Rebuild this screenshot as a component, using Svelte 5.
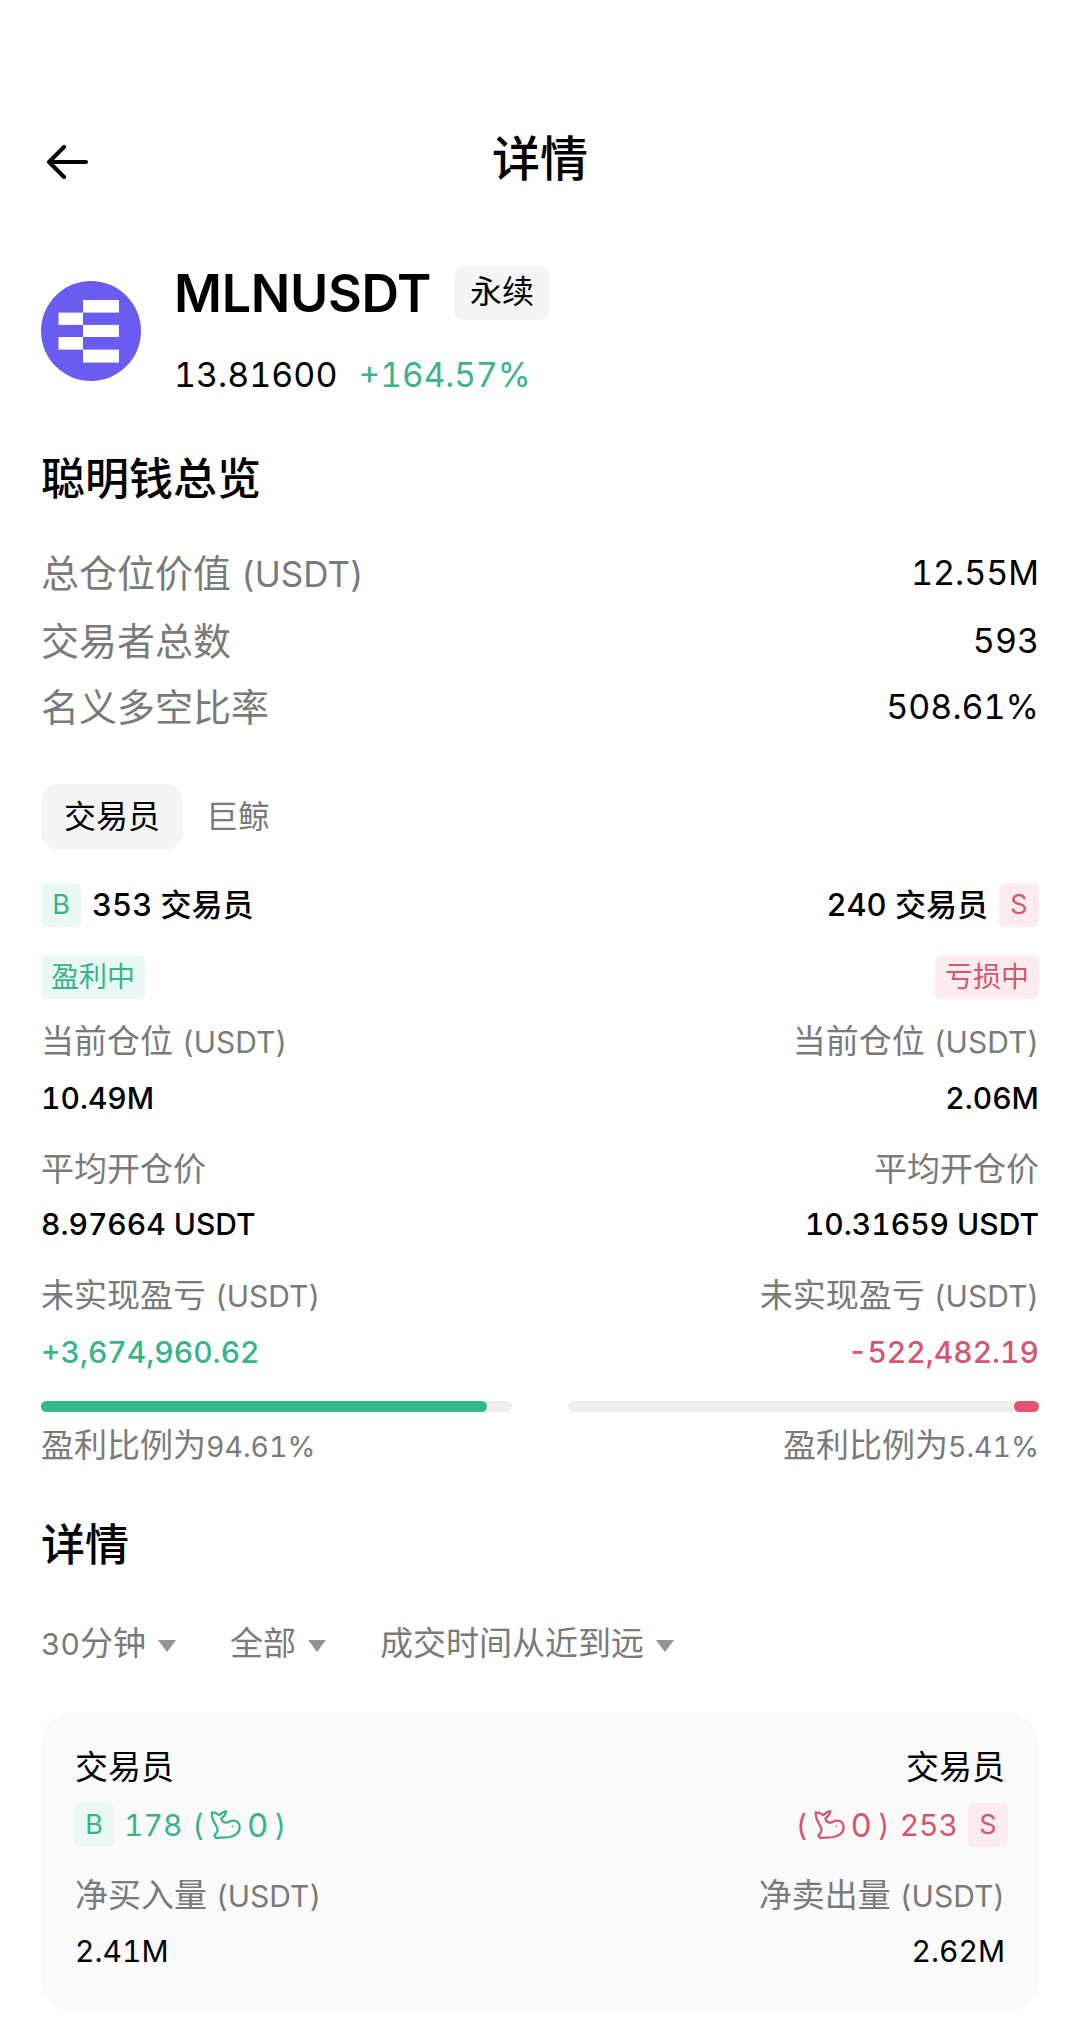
<script>
  const cols = [
    { label: '当前仓位', unit: '(USDT)', value: '10.49M', cls: '' },
    { label: '平均开仓价', unit: '', value: '8.97664 USDT', cls: '' },
    { label: '未实现盈亏', unit: '(USDT)', value: '+3,674,960.62', cls: 'green' }
  ];
  const colsR = [
    { label: '当前仓位', unit: '(USDT)', value: '2.06M', cls: '' },
    { label: '平均开仓价', unit: '', value: '10.31659 USDT', cls: '' },
    { label: '未实现盈亏', unit: '(USDT)', value: '-522,482.19', cls: 'red' }
  ];
  const overview = [
    ['总仓位价值', '(USDT)', '12.55M'],
    ['交易者总数', '', '593'],
    ['名义多空比率', '', '508.61%']
  ];
  const filters = [
    { num: '30', text: '分钟' },
    { num: '', text: '全部' },
    { num: '', text: '成交时间从近到远' }
  ];
</script>

{#snippet whale()}
  <svg class="whale" viewBox="25 18 90 90" fill="none" stroke="currentColor" stroke-width="6.5" stroke-linejoin="round" stroke-linecap="round">
    <path d="M30 28C38 28 46 31 52 36C58 30 64 25 72 24C71 33 66 40 58 45C60 54 67 59 76 57C84 52 92 50 100 53C108 57 111 63 111 72C110 88 95 99 78 100L48 102C44 103 40 100 38 95C42 90 47 84 47 78C46 68 38 60 34 50C31 43 30 35 30 28Z"/>
    <circle cx="90" cy="68" r="2.5" fill="currentColor" stroke="none"/>
  </svg>
{/snippet}

<div class="page">
  <header class="nav">
    <svg class="back" viewBox="0 0 42 34" fill="none" stroke="#000" stroke-width="4" stroke-linecap="round" stroke-linejoin="round">
      <path d="M3 17h37M18 2 3 17l15 15"/>
    </svg>
    <h1>详情</h1>
  </header>

  <section class="coin">
    <svg class="logo" viewBox="0 0 100 100">
      <circle cx="50" cy="50" r="50" fill="#6a5cf0"/>
      <g fill="#fff">
        <rect x="42" y="19" width="36" height="12.6"/>
        <rect x="17.5" y="31.6" width="24.5" height="12.3"/>
        <rect x="42" y="43.9" width="36" height="12.1"/>
        <rect x="17.5" y="56" width="24.5" height="12.6"/>
        <rect x="42" y="68.6" width="36" height="13"/>
      </g>
    </svg>
    <div class="coin-text">
      <div class="symbol-row">
        <span class="symbol">MLNUSDT</span>
        <span class="perp">永续</span>
      </div>
      <div class="price-row">
        <span>13.81600</span>
        <span class="green change">+164.57%</span>
      </div>
    </div>
  </section>

  <h2 class="overview-title">聪明钱总览</h2>
  <div class="overview">
    {#each overview as row}
      <div class="ov-row">
        <span class="muted">{row[0]}{#if row[1]}<span class="ov-unit">{row[1]}</span>{/if}</span>
        <span class="ov-val">{row[2]}</span>
      </div>
    {/each}
  </div>

  <div class="tabs">
    <span class="tab active">交易员</span>
    <span class="tab">巨鲸</span>
  </div>

  <div class="split">
    <div class="side">
      <div class="count"><span class="letter bg-g">B</span><span>353 交易员</span></div>
      <span class="tag bg-g">盈利中</span>
      {#each cols as c}
        <div class="stat"><span class="label">{c.label}{#if c.unit}<span class="unit spaced">{c.unit}</span>{/if}</span><span class="val {c.cls}">{c.value}</span></div>
      {/each}
    </div>
    <div class="side right">
      <div class="count"><span>240 交易员</span><span class="letter bg-r">S</span></div>
      <span class="tag bg-r">亏损中</span>
      {#each colsR as c}
        <div class="stat"><span class="label">{c.label}{#if c.unit}<span class="unit spaced">{c.unit}</span>{/if}</span><span class="val {c.cls}">{c.value}</span></div>
      {/each}
    </div>
  </div>

  <div class="bars">
    <div class="bar-col">
      <div class="track"><div class="fill fill-g" style="width:94.61%"></div></div>
      <span class="pct">盈利比例为<span class="pct-num">94.61%</span></span>
    </div>
    <div class="bar-col right">
      <div class="track end"><div class="fill fill-r" style="width:5.41%"></div></div>
      <span class="pct">盈利比例为<span class="pct-num">5.41%</span></span>
    </div>
  </div>

  <h2 class="detail-title">详情</h2>
  <div class="filters">
    {#each filters as f}
      <span class="filter"><span>{#if f.num}<span class="unit">{f.num}</span>{/if}{f.text}</span><i class="caret"></i></span>
    {/each}
  </div>

  <div class="card">
    <div class="card-col">
      <span class="card-head">交易员</span>
      <div class="card-count green"><span class="letter bg-g">B</span><span>178</span><span class="wrap">({@render whale()}<span class="zero">0</span>)</span></div>
      <span class="label card-label">净买入量<span class="unit spaced">(USDT)</span></span>
      <span class="card-val">2.41M</span>
    </div>
    <div class="card-col right">
      <span class="card-head">交易员</span>
      <div class="card-count red"><span class="wrap">({@render whale()}<span class="zero">0</span>)</span><span>253</span><span class="letter bg-r">S</span></div>
      <span class="label card-label">净卖出量<span class="unit spaced">(USDT)</span></span>
      <span class="card-val">2.62M</span>
    </div>
  </div>
</div>

<style>
  :global(body) { margin: 0; background: #fff; }
  .page {
    width: 1080px;
    height: 2040px;
    overflow: hidden;
    box-sizing: border-box;
    padding: 129px 41px 0;
    font-family: Inter, "Noto Sans CJK SC", sans-serif;
    font-variant-numeric: tabular-nums;
    color: #000;
  }
  .green { color: #38b48b; }
  .red { color: #d4566f; }
  .muted { color: #7a7a7a; }
  .nav { position: relative; display: flex; align-items: center; justify-content: center; height: 60px; }
  .back { position: absolute; left: 5px; top: 16px; width: 42px; height: 34px; }
  h1 { margin: 0; font-size: 48px; line-height: 60px; font-weight: 500; }
  .coin { display: flex; align-items: flex-start; margin-top: 74px; }
  .logo { width: 100px; height: 100px; margin-right: 33px; margin-top: 18px; flex: none; }
  .symbol-row { display: flex; align-items: center; gap: 23px; height: 60px; }
  .symbol { font-size: 52px; font-weight: 600; letter-spacing: -0.3px; }
  .perp { background: #f5f5f5; border-radius: 10px; font-size: 32px; padding: 0 16px; height: 54px; line-height: 52px; }
  .price-row { display: flex; gap: 21px; font-size: 34px; margin-top: 30px; line-height: 44px; }
  .change { font-size: 33.5px; }
  h2 { margin: 0; font-size: 44px; font-weight: 500; line-height: 60px; }
  .overview-title { margin-top: 52px; }
  .overview { margin-top: 42px; display: flex; flex-direction: column; gap: 22px; }
  .ov-row { display: flex; justify-content: space-between; font-size: 38px; line-height: 44.5px; }
  .ov-unit { font-size: 35px; margin-left: 10px; }
  .ov-val { font-size: 34px; }
  .tabs { display: flex; align-items: center; gap: 23px; margin-top: 54px; }
  .tab { font-size: 32px; color: #7a7a7a; line-height: 66px; }
  .tab.active { color: #000; background: #f5f5f5; border-radius: 18px; padding: 0 23px; }
  .split { display: flex; justify-content: space-between; margin-top: 33px; }
  .side { display: flex; flex-direction: column; align-items: flex-start; }
  .side.right { align-items: flex-end; text-align: right; }
  .count { display: flex; align-items: center; gap: 11px; font-size: 31px; font-weight: 500; line-height: 44px; }
  .letter { width: 40px; height: 44px; border-radius: 6px; display: flex; align-items: center; justify-content: center; font-size: 27px; font-weight: 400; }
  .bg-g { background: #e9f8f2; color: #38b48b; }
  .bg-r { background: #fcecef; color: #d4566f; }
  .tag { margin-top: 28px; font-size: 28px; line-height: 44px; padding: 0 10px; border-radius: 6px; }
  .stat { display: flex; flex-direction: column; margin-top: 22.5px; }
  .stat + .stat { margin-top: 31px; }
  .label { font-size: 33px; color: #7a7a7a; line-height: 40px; }
  .unit { font-size: 30px; }
  .spaced { margin-left: 9px; font-size: 30px; }
  .val { font-size: 30px; font-weight: 500; line-height: 40px; margin-top: 15.5px; }
  .bars { display: flex; justify-content: space-between; margin-top: 29px; }
  .bar-col { width: 471px; display: flex; flex-direction: column; }
  .bar-col.right { align-items: flex-end; }
  .track { width: 100%; height: 11px; background: #eeeeee; border-radius: 6px; display: flex; }
  .track.end { justify-content: flex-end; }
  .fill { height: 100%; border-radius: 6px; }
  .fill-g { background: #34b98a; }
  .fill-r { background: #e4526c; }
  .pct { font-size: 33px; color: #7a7a7a; line-height: 40px; margin-top: 13px; }
  .pct-num { font-size: 28.5px; }
  .detail-title { margin-top: 48px; }
  .filters { display: flex; gap: 54px; margin-top: 46px; }
  .filter { display: flex; align-items: center; font-size: 33px; color: #7a7a7a; line-height: 44px; }
  .caret { width: 0; height: 0; border: 9.5px solid transparent; border-top: 12px solid #949494; border-bottom: 0; margin-left: 12px; margin-top: 6px; }
  .card { display: flex; justify-content: space-between; background: #fafafa; border-radius: 32px; margin-top: 46px; padding: 35px 34px 41px; }
  .card-col { display: flex; flex-direction: column; align-items: flex-start; }
  .card-col.right { align-items: flex-end; }
  .card-head { font-size: 33px; line-height: 40px; }
  .card-count { display: flex; align-items: center; gap: 10px; font-size: 30px; line-height: 44px; margin: 16px -3px 0 -1px; }
  .wrap { display: flex; align-items: center; gap: 6px; }
  .zero { font-size: 33px; }
  .whale { width: 31px; height: 31px; }
  .card-label { margin-top: 28px; }
  .card-val { font-size: 30px; line-height: 40px; margin-top: 15px; font-weight: 400; }
</style>
